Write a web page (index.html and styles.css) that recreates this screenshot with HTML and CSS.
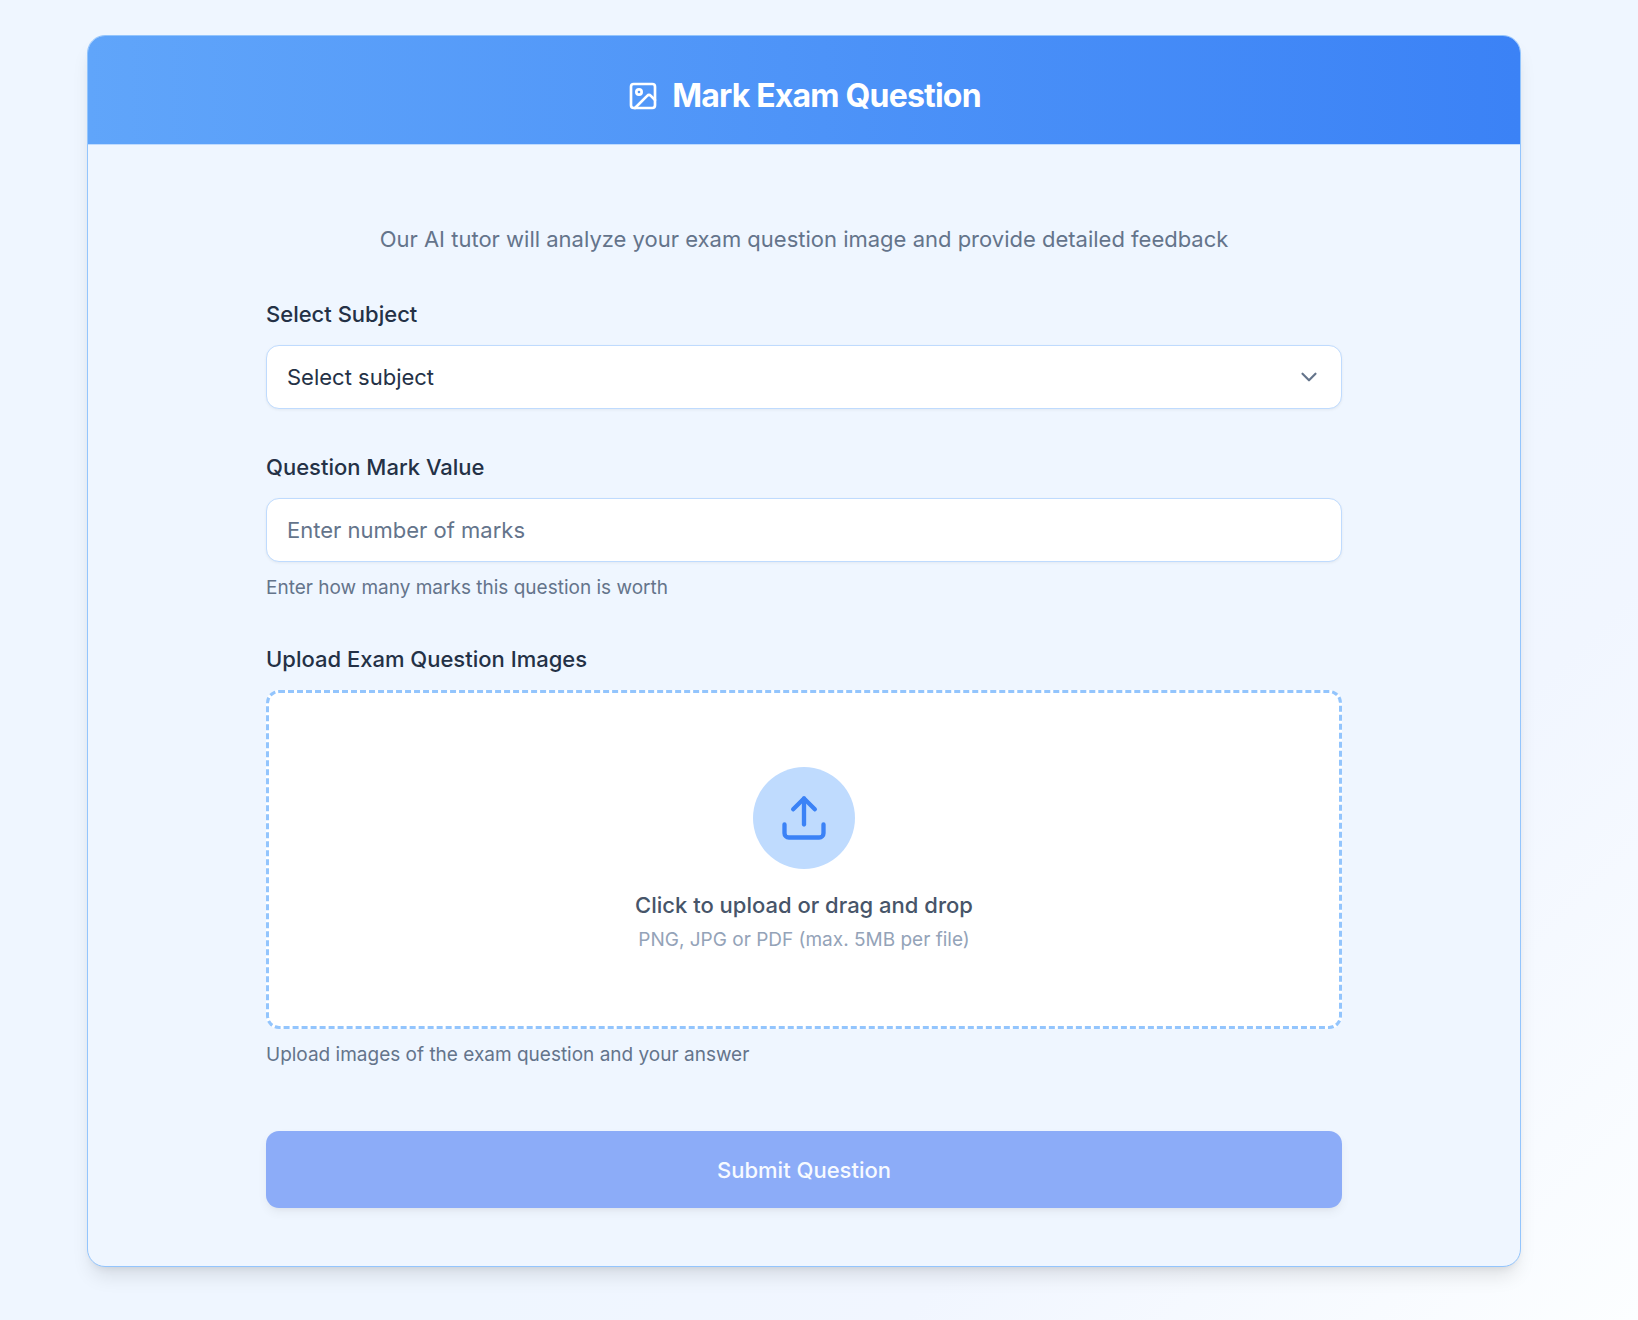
FILE: index.html
```html
<!DOCTYPE html>
<html lang="en">
<head>
  <meta charset="utf-8">
  <meta name="viewport" content="width=device-width, initial-scale=1">
  <title>Mark Exam Question</title>
  <link rel="stylesheet" href="styles.css">
</head>
<body>
  <main class="page">
    <section class="card">
      <header class="card-header">
        <svg class="title-icon" viewBox="0 0 24 24" aria-hidden="true">
          <rect x="3" y="3" width="18" height="18" rx="2"/>
          <circle cx="9" cy="9" r="2"/>
          <path d="m21 15-3.086-3.086a2 2 0 0 0-2.828 0L6 21"/>
        </svg>
        <h1 class="title">Mark Exam Question</h1>
      </header>
      <form class="form">
        <p class="intro">Our AI tutor will analyze your exam question image and provide detailed feedback</p>

        <div class="field">
          <label class="label" for="subject">Select Subject</label>
          <div class="select-wrap">
            <select class="control" id="subject">
              <option>Select subject</option>
            </select>
            <svg class="chevron" viewBox="0 0 24 24" aria-hidden="true"><path d="m6 9 6 6 6-6"/></svg>
          </div>
        </div>

        <div class="field">
          <label class="label" for="marks">Question Mark Value</label>
          <input class="control" id="marks" type="text" inputmode="numeric" placeholder="Enter number of marks">
          <p class="hint">Enter how many marks this question is worth</p>
        </div>

        <div class="field">
          <label class="label" for="images">Upload Exam Question Images</label>
          <label class="dropzone" for="images">
            <span class="upload-badge">
              <svg class="upload-icon" viewBox="0 0 24 24" aria-hidden="true">
                <path d="M21 15v4a2 2 0 0 1-2 2H5a2 2 0 0 1-2-2v-4"/>
                <path d="m17 8-5-5-5 5"/>
                <path d="M12 3v12"/>
              </svg>
            </span>
            <span class="drop-title">Click to upload or drag and drop</span>
            <span class="drop-note">PNG, JPG or PDF (max. 5MB per file)</span>
          </label>
          <input class="file-input" id="images" type="file" accept=".png,.jpg,.pdf" multiple>
          <p class="hint">Upload images of the exam question and your answer</p>
        </div>

        <button class="submit" type="submit" disabled>Submit Question</button>
      </form>
    </section>
  </main>
</body>
</html>
```
FILE: styles.css
```css
* {
  box-sizing: border-box;
}

body {
  margin: 0;
  min-height: 100vh;
  background: linear-gradient(135deg, #eff6ff 0%, #eff6ff 60%, #f1f6ff 75%, #fcfeff 100%);
  color: #243146;
  font-family: Inter, "Liberation Sans", sans-serif;
  font-size: 22px;
  line-height: 34px;
}

h1,
p {
  margin: 0;
}

.page {
  padding: 35px 117px 54px 87px;
}

.card {
  border: 1px solid #93c5fd;
  border-radius: 18px;
  background: #eff6ff;
  box-shadow: 0 13px 19px -4px rgba(0, 0, 0, 0.1), 0 5px 8px -5px rgba(0, 0, 0, 0.1);
  overflow: hidden;
}

.card-header {
  display: flex;
  align-items: center;
  justify-content: center;
  gap: 13px;
  padding: 40px 32px 28px;
  border-bottom: 1px solid #bfdbfe;
  background: linear-gradient(to right, #60a5fa, #3b82f6);
  background-clip: padding-box;
  color: #fff;
}

.title {
  font-size: 32px;
  font-weight: 700;
  line-height: 40px;
  letter-spacing: -0.025em;
}

svg {
  fill: none;
  stroke: currentColor;
  stroke-width: 2;
  stroke-linecap: round;
  stroke-linejoin: round;
}

.title-icon {
  width: 32px;
  height: 32px;
}

.form {
  display: flex;
  flex-direction: column;
  gap: 42px;
  width: 100%;
  max-width: 1076px;
  margin: 0 auto;
  padding: 77px 0 58px;
}

.intro {
  color: #64748b;
  text-align: center;
}

.field {
  display: flex;
  flex-direction: column;
}

.label {
  margin-bottom: 15px;
  font-weight: 500;
  line-height: 32px;
}

.select-wrap {
  display: grid;
  align-items: center;
}

.select-wrap > * {
  grid-area: 1 / 1;
}

.control {
  width: 100%;
  height: 64px;
  padding: 0 20px;
  border: 1px solid #bfdbfe;
  border-radius: 13px;
  background: #fff;
  box-shadow: 0 1px 3px rgba(0, 0, 0, 0.06);
  color: inherit;
  font: inherit;
  appearance: none;
}

.control::placeholder {
  color: #64748b;
  opacity: 1;
}

.chevron {
  justify-self: end;
  width: 26px;
  height: 26px;
  margin-right: 20px;
  color: #64748b;
  pointer-events: none;
}

.hint {
  margin-top: 12px;
  color: #64748b;
  font-size: 19px;
  line-height: 27px;
}

.dropzone {
  display: flex;
  flex-direction: column;
  align-items: center;
  padding: 74px 20px 73px;
  border: 3px dashed #93c5fd;
  border-radius: 13px;
  background: #fff;
  cursor: pointer;
}

.upload-badge {
  display: grid;
  place-items: center;
  width: 102px;
  height: 102px;
  margin-bottom: 19px;
  border-radius: 50%;
  background: #bfdbfe;
  color: #3b82f6;
}

.upload-icon {
  width: 52px;
  height: 52px;
}

.drop-title {
  margin-bottom: 4px;
  color: #475569;
  font-weight: 500;
}

.drop-note {
  color: #94a3b8;
  font-size: 19px;
  line-height: 27px;
}

.file-input {
  display: none;
}

.submit {
  height: 77px;
  margin-top: 21px;
  border: 0;
  border-radius: 13px;
  background: #2b64f3;
  box-shadow: 0 5px 8px -1px rgba(0, 0, 0, 0.1), 0 3px 5px -3px rgba(0, 0, 0, 0.1);
  color: #fff;
  font: inherit;
  font-weight: 500;
}

.submit:disabled {
  opacity: 0.5;
}
```
